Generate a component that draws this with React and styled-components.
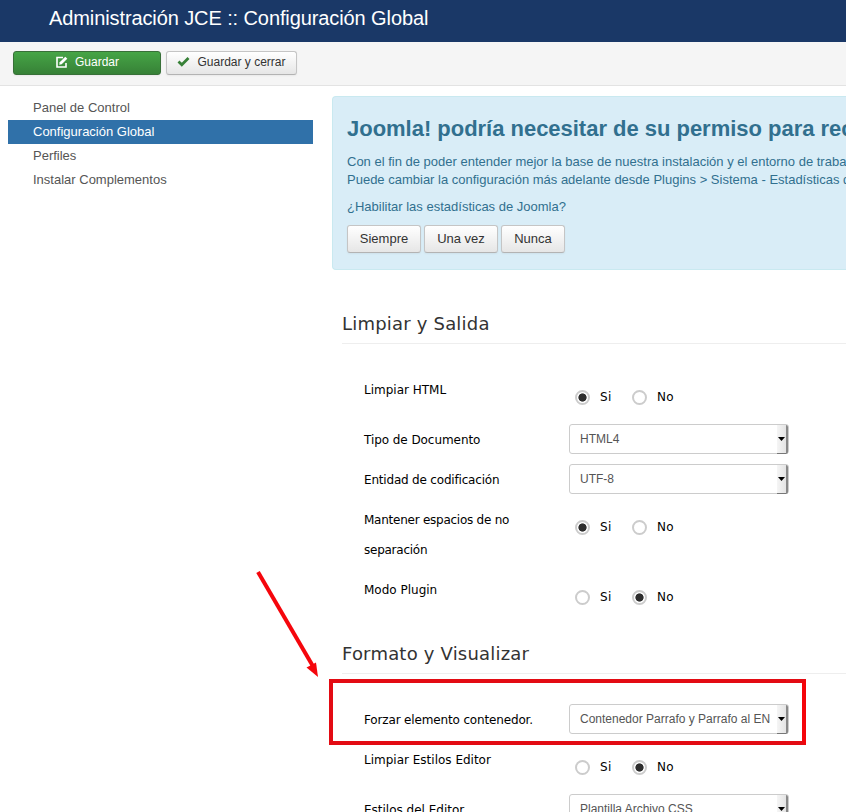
import React from "react";
import styled, { createGlobalStyle } from "styled-components";

const GlobalStyle = createGlobalStyle`
  * {
    box-sizing: border-box;
  }
  body {
    margin: 0;
    background: #fff;
    font-family: "Liberation Sans", Arial, sans-serif;
    font-size: 13px;
    color: #333;
    overflow: hidden;
  }
`;

const Page = styled.div`
  position: relative;
  width: 846px;
  height: 812px;
  overflow: hidden;
`;

const Header = styled.header`
  height: 42px;
  padding-left: 49px;
  background: #1a3867;
  color: #fff;
`;

const HeaderTitle = styled.h1`
  margin: 0;
  font-size: 20px;
  line-height: 36px;
  font-weight: normal;
  letter-spacing: -0.1px;
`;

const Toolbar = styled.div`
  display: flex;
  align-items: flex-start;
  gap: 5px;
  height: 44px;
  padding: 9px 13px;
  background: #f5f5f5;
  border-bottom: 1px solid #e3e3e3;
`;

const Button = styled.button`
  display: flex;
  align-items: center;
  justify-content: center;
  width: ${(props) => props.$width}px;
  height: 28px;
  margin: 0;
  padding: 0 0 1px;
  border: 1px solid #c5c5c5;
  border-bottom-color: #b3b3b3;
  border-radius: 3px;
  background: linear-gradient(#fff, #e6e6e6);
  box-shadow: 0 1px 2px rgba(0, 0, 0, 0.05);
  color: #333;
  font-family: inherit;
  font-size: 13px;
  white-space: nowrap;
`;

const ToolbarButton = styled(Button)`
  height: 24px;
  padding-bottom: 2px;
  font-size: 12px;
  svg {
    flex: none;
    margin-right: 7px;
  }
`;

const SaveButton = styled(ToolbarButton)`
  padding-left: 1px;
  border-color: #387038;
  background: linear-gradient(#46a546, #378137);
  color: #fff;
`;

const Main = styled.div`
  display: flex;
  padding: 10px 0 0 8px;
`;

const Sidebar = styled.nav`
  flex: none;
  width: 305px;
  margin-right: 19px;
`;

const NavItem = styled.div`
  height: 24px;
  padding-left: 25px;
  line-height: 23px;
  background: ${(props) => (props.$active ? "#3071a9" : "transparent")};
  color: ${(props) => (props.$active ? "#fff" : "#555")};
`;

const Content = styled.div`
  flex: none;
  width: 514px;
  overflow: hidden;
`;

const Alert = styled.div`
  height: 174px;
  padding: 19px 0 0 14px;
  border: 1px solid #c9e9f0;
  border-right: 0;
  border-radius: 4px 0 0 4px;
  background: #d9edf7;
  color: #31708f;
  white-space: nowrap;
`;

const AlertTitle = styled.h2`
  margin: 0 0 11px;
  font-size: 22px;
  line-height: 26px;
  letter-spacing: -0.02px;
`;

const Paragraph = styled.p`
  margin: 0 0 9px;
  line-height: 18px;
`;

const AlertButtons = styled.div`
  display: flex;
  gap: 3px;
`;

const Section = styled.section`
  padding-left: 10px;
  margin-top: ${(props) => props.$top}px;
  font-family: "DejaVu Sans", Verdana, sans-serif;
`;

const SectionTitle = styled.h3`
  height: 41px;
  margin: 0 0 31px;
  border-bottom: 1px solid #eee;
  color: #333;
  font-size: 18px;
  line-height: 41px;
  font-weight: normal;
  letter-spacing: 0.2px;
`;

const Row = styled.div`
  display: flex;
  align-items: flex-start;
  height: ${(props) => props.$height}px;
  padding-left: 22px;
`;

const Label = styled.div`
  flex: none;
  width: 205px;
  color: #000;
  font-size: 12px;
  line-height: 30px;
  letter-spacing: ${(props) => props.$spacing || 0}px;
  white-space: pre-line;
`;

const RadioGroup = styled.div`
  display: flex;
  padding: 14px 0 0 6px;
`;

const RadioOption = styled.div`
  display: flex;
  width: 57px;
  color: #000;
  font-size: 12px;
  line-height: 16px;
`;

const RadioText = styled.span`
  margin-left: 10px;
  letter-spacing: 0.3px;
`;

const Circle = styled.span`
  width: 15px;
  height: 15px;
  margin-top: 1px;
  border: 2px solid #ccc;
  border-radius: 50%;
  background: ${(props) =>
    props.$checked ? "radial-gradient(circle, #2d2d2d 3.7px, #fff 4.5px)" : "#fff"};
`;

const SelectBox = styled.div`
  display: flex;
  justify-content: space-between;
  width: 220px;
  height: 30px;
  margin-top: -1px;
  padding-left: 10px;
  border: 1px solid #ccc;
  border-radius: 3px;
  color: #555;
  font-family: "Liberation Sans", Arial, sans-serif;
  font-size: 12px;
  line-height: 28px;
  white-space: nowrap;
`;

const SelectArrow = styled.span`
  display: flex;
  align-items: center;
  justify-content: center;
  width: 11px;
  height: 29px;
  border-right: 2px solid #888;
  border-bottom: 1px solid #777;
  border-radius: 0 2px 2px 0;
  background: linear-gradient(90deg, #f5f5f5, #e4e4e4);
  svg {
    flex: none;
  }
`;

const Highlight = styled.div`
  position: absolute;
  left: 329px;
  top: 679px;
  width: 477px;
  height: 66px;
  border: 4px solid #e30b13;
  border-right-color: #f5040a;
`;

const Pointer = styled.svg`
  position: absolute;
  left: 250px;
  top: 565px;
`;

const EditIcon = () => (
  <svg width="12" height="12" viewBox="0 0 12 12" fill="none">
    <path d="M7 1.5H1V11H10V7" stroke="#fff" strokeWidth="1.6" />
    <path d="M3.2 8.8L3.7 6.3L9.3 0.8L11.3 2.7L5.7 8.3Z" fill="#fff" />
  </svg>
);

const CheckIcon = () => (
  <svg width="13" height="12" viewBox="0 0 13 12" fill="none">
    <path d="M1.5 5.5L4.8 8.7L11.5 2" stroke="#378137" strokeWidth="2.8" />
  </svg>
);

const Radios = ({ value }) => (
  <RadioGroup>
    {["Si", "No"].map((option) => (
      <RadioOption key={option}>
        <Circle $checked={value === option} />
        <RadioText>{option}</RadioText>
      </RadioOption>
    ))}
  </RadioGroup>
);

const Select = ({ value }) => (
  <SelectBox>
    {value}
    <SelectArrow>
      <svg width="7" height="4" viewBox="0 0 7 4">
        <path d="M0 0H7L3.5 4Z" fill="#000" />
      </svg>
    </SelectArrow>
  </SelectBox>
);

const navItems = [
  { text: "Panel de Control" },
  { text: "Configuración Global", active: true },
  { text: "Perfiles" },
  { text: "Instalar Complementos" },
];

const sections = [
  {
    title: "Limpiar y Salida",
    top: 33,
    rows: [
      { label: "Limpiar HTML", height: 50, radio: "Si" },
      { label: "Tipo de Documento", height: 40, select: "HTML4", spacing: -0.06 },
      { label: "Entidad de codificación", height: 40, select: "UTF-8", spacing: -0.19 },
      {
        label: "Mantener espacios de no\nseparación",
        height: 70,
        radio: "Si",
        spacing: -0.25,
      },
      { label: "Modo Plugin", height: 50, radio: "No" },
    ],
  },
  {
    title: "Formato y Visualizar",
    top: 8,
    rows: [
      {
        label: "Forzar elemento contenedor.",
        height: 40,
        select: "Contenedor Parrafo y Parrafo al EN",
        spacing: -0.15,
      },
      { label: "Limpiar Estilos Editor", height: 50, radio: "No" },
      { label: "Estilos del Editor", height: 40, select: "Plantilla Archivo CSS" },
    ],
  },
];

const App = () => {
  return (
    <Page>
      <GlobalStyle />
      <Header>
        <HeaderTitle>Administración JCE :: Configuración Global</HeaderTitle>
      </Header>
      <Toolbar>
        <SaveButton $width={148}>
          <EditIcon />
          Guardar
        </SaveButton>
        <ToolbarButton $width={131}>
          <CheckIcon />
          Guardar y cerrar
        </ToolbarButton>
      </Toolbar>
      <Main>
        <Sidebar>
          {navItems.map(({ text, active }) => (
            <NavItem key={text} $active={active}>
              {text}
            </NavItem>
          ))}
        </Sidebar>
        <Content>
          <Alert>
            <AlertTitle>Joomla! podría necesitar de su permiso para rec</AlertTitle>
            <Paragraph>
              Con el fin de poder entender mejor la base de nuestra instalación y el entorno de traba
              <br />
              Puede cambiar la configuración más adelante desde Plugins &gt; Sistema - Estadísticas d
            </Paragraph>
            <Paragraph>¿Habilitar las estadísticas de Joomla?</Paragraph>
            <AlertButtons>
              <Button $width={74}>Siempre</Button>
              <Button $width={74}>Una vez</Button>
              <Button $width={64}>Nunca</Button>
            </AlertButtons>
          </Alert>
          {sections.map(({ title, top, rows }) => (
            <Section key={title} $top={top}>
              <SectionTitle>{title}</SectionTitle>
              {rows.map(({ label, height, radio, select, spacing }) => (
                <Row key={label} $height={height}>
                  <Label $spacing={spacing}>{label}</Label>
                  {radio && <Radios value={radio} />}
                  {select && <Select value={select} />}
                </Row>
              ))}
            </Section>
          ))}
        </Content>
      </Main>
      <Highlight />
      <Pointer width="75" height="120" viewBox="0 0 75 120">
        <path d="M8 7L64 103" stroke="#f5060c" strokeWidth="4" />
        <path d="M68 112L56.5 102.5L66 97.5Z" fill="#f5060c" />
      </Pointer>
    </Page>
  );
};

export default App;
